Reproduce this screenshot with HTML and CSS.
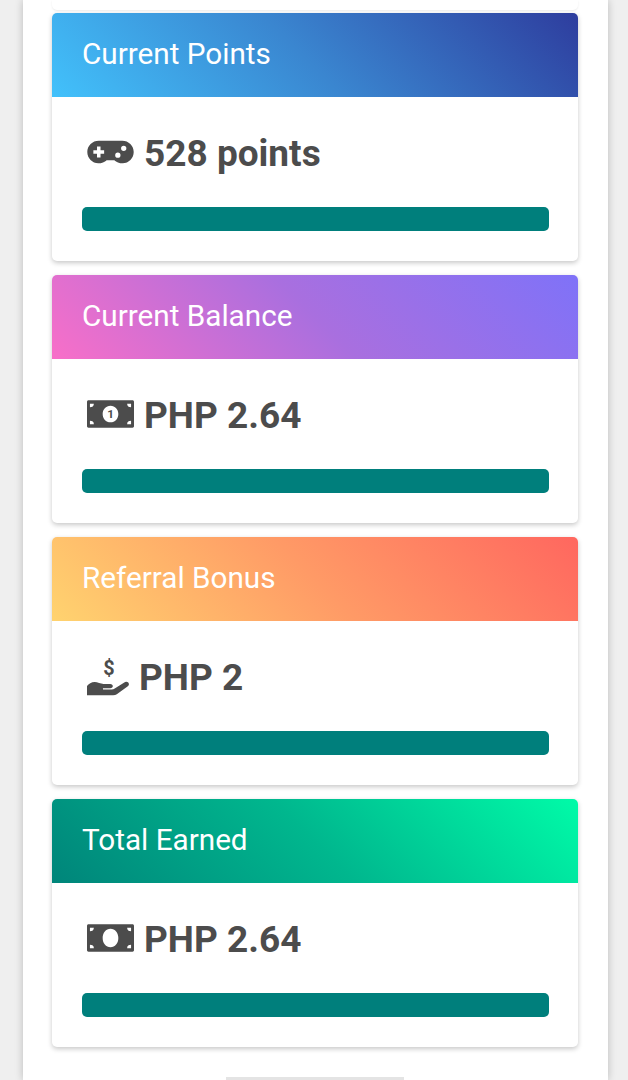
FILE: index.html
```html
<!DOCTYPE html>
<html lang="en">
<head>
    <meta charset="UTF-8">
    <meta name="viewport" content="width=device-width, initial-scale=1.0">
    <title>Dashboard</title>
    <link rel="stylesheet" href="styles.css">
</head>
<body>
    <div class="panel">
        <!-- Previous card, scrolled off the top -->
        <div class="card-stub"></div>

        <div class="card">
            <div class="card-header header-blue">Current Points</div>
            <div class="card-body">
                <h2 class="stat">
                    <svg class="icon icon-game" viewBox="0 0 48 24">
                        <path fill-rule="evenodd" d="M12 .5h24c6.500 0 11.700 5 11.700 11.500S42.500 23.500 36.500 23.500c-3.500 0-6.500-1.200-8.600-3.200h-7.800c-2.100 2-5.100 3.200-8.600 3.200C5.500 23.500.3 18.500.3 12S5.500.5 12 .5zM10.200 6.500v3.700H6.500v3.600h3.700v3.700h3.600v-3.700h3.700v-3.600h-3.700V6.500h-3.600zM37.500 5.500a2.700 2.700 0 1 0 0 5.400 2.700 2.700 0 0 0 0-5.400zM31.500 12.500a2.700 2.700 0 1 0 0 5.400 2.700 2.700 0 0 0 0-5.400z"/>
                    </svg>
                    528 points
                </h2>
                <div class="bar"></div>
            </div>
        </div>

        <div class="card">
            <div class="card-header header-purple">Current Balance</div>
            <div class="card-body">
                <h2 class="stat">
                    <svg class="icon icon-money" viewBox="0 0 48 28">
                        <path fill-rule="evenodd" d="M1.500 0h45c.8 0 1.500.7 1.500 1.500v25c0 .8-.7 1.500-1.500 1.500h-45C.7 28 0 27.300 0 26.500v-25C0 .7.700 0 1.500 0zM3 3.500v3.500c2.500 0 4-1 4-3.500H3zM41 3.500c0 2.500 1.500 3.500 4 3.500V3.500h-4zM3 21v3.500h4c0-2.500-1.500-3.500-4-3.500zM45 21c-2.500 0-4 1-4 3.500h4V21zM24 5.500c-4.700 0-8 3.800-8 8.500s3.300 8.500 8 8.500 8-3.800 8-8.500-3.300-8.500-8-8.500z"/>
                        <text class="bill-digit" x="24" y="18.500" text-anchor="middle">1</text>
                    </svg>
                    PHP 2.64
                </h2>
                <div class="bar"></div>
            </div>
        </div>

        <div class="card">
            <div class="card-header header-orange">Referral Bonus</div>
            <div class="card-body">
                <h2 class="stat">
                    <svg class="icon icon-hand" viewBox="0 0 40 36">
                        <text class="hand-dollar" x="20" y="17" text-anchor="middle">$</text>
                        <path d="M0 27c1.500-1.500 4-3.500 7-3.500 2.500 0 5.500 1.700 8 1.700h6c1.700 0 2.500 1 2.500 2s-.8 2-2.500 2h-6.500v1h8c1 0 2-.3 2.700-.9l8.700-5.500c1.300-.9 3-.6 3.800.4.700 1.100.5 2.400-.6 3.200l-10 7.100c-1 .7-2.100 1-3.300 1H0V27z"/>
                    </svg>
                    PHP 2
                </h2>
                <div class="bar"></div>
            </div>
        </div>

        <div class="card">
            <div class="card-header header-green">Total Earned</div>
            <div class="card-body">
                <h2 class="stat">
                    <svg class="icon icon-money" viewBox="0 0 48 28">
                        <path fill-rule="evenodd" d="M1.500 0h45c.8 0 1.500.7 1.500 1.500v25c0 .8-.7 1.500-1.500 1.500h-45C.7 28 0 27.300 0 26.500v-25C0 .7.700 0 1.500 0zM3 3.500v3.500c2.500 0 4-1 4-3.500H3zM41 3.500c0 2.500 1.500 3.500 4 3.500V3.500h-4zM3 21v3.500h4c0-2.500-1.500-3.500-4-3.500zM45 21c-2.500 0-4 1-4 3.500h4V21zM24 4.500c-4.700 0-8 4.200-8 9.500s3.300 9.500 8 9.500 8-4.200 8-9.500-3.300-9.500-8-9.500z"/>
                    </svg>
                    PHP 2.64
                </h2>
                <div class="bar"></div>
            </div>
        </div>

        <div class="footer-tab"></div>
    </div>
</body>
</html>
```

FILE: styles.css
```css
html, body {
    height: 1080px;
    overflow: hidden;
}
body {
    font-family: Roboto, "Liberation Sans", sans-serif;
    background-color: #efefef;
    margin: 0;
    padding: 0;
}
.panel {
    width: 585px;
    height: 1080px;
    margin-left: 23px;
    padding: 0 30px 0 29px;
    box-sizing: border-box;
    background: #fff;
    box-shadow: 0 0 8px rgba(0, 0, 0, 0.22);
}
.card-stub {
    height: 10px;
    margin-bottom: 3px;
    background: #fff;
    border-radius: 0 0 5px 5px;
    box-shadow: 0 1px 2px rgba(0, 0, 0, 0.08);
}
.card {
    height: 248px;
    margin-bottom: 14px;
    background: #fff;
    border-radius: 5px;
    box-shadow: 0 2px 5px rgba(0, 0, 0, 0.22);
    overflow: hidden;
}
.card-header {
    height: 84px;
    padding-left: 30px;
    font-size: 29.7px;
    line-height: 81px;
    color: #fff;
}
.header-blue {
    background: linear-gradient(45deg, #42c1fb 0%, #3a86d0 48%, #2e3d9e 100%);
}
.header-purple {
    background: linear-gradient(45deg, #f86fc8 0%, #a96fdf 50%, #7f72f8 100%);
}
.header-orange {
    background: linear-gradient(45deg, #ffd36f 0%, #ff9a66 50%, #ff675f 100%);
}
.header-green {
    background: linear-gradient(45deg, #00857a 0%, #00b78e 50%, #00fba8 100%);
}
.card-body {
    padding: 0 29px 0 30px;
}
.stat {
    display: flex;
    align-items: center;
    gap: 10px;
    height: 110px;
    box-sizing: border-box;
    margin: 0;
    padding: 2px 0 0 5px;
    font-size: 37px;
    font-weight: 700;
    color: #4c4c4c;
}
.icon {
    fill: #4c4c4c;
    flex: none;
    margin-top: -3px;
}
.icon-game {
    width: 47px;
    height: 24px;
}
.icon-money {
    width: 47px;
    height: 28px;
}
.icon-hand {
    width: 44px;
    height: 40px;
    margin-right: -2px;
}
.bill-digit {
    font-size: 12px;
    font-weight: 700;
}
.hand-dollar {
    font-size: 18px;
    font-weight: 700;
}
.bar {
    height: 24px;
    background: #007f7c;
    border-radius: 5px;
}
.footer-tab {
    width: 178px;
    height: 10px;
    margin: 30px auto 0;
    background: #e4e4e4;
}
```
